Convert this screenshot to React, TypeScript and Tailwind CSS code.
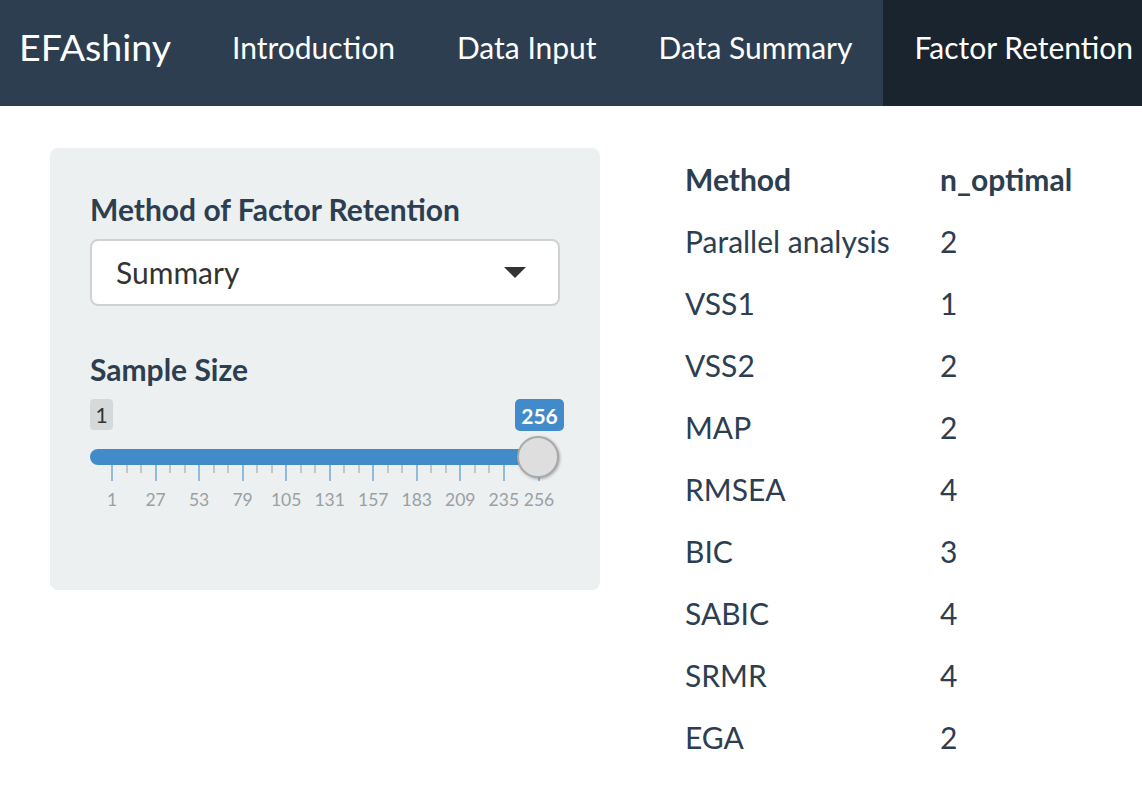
import React from 'react'

const navItems = ['Introduction', 'Data Input', 'Data Summary', 'Factor Retention']

const rows: [string, number][] = [
    ['Parallel analysis', 2],
    ['VSS1', 1],
    ['VSS2', 2],
    ['MAP', 2],
    ['RMSEA', 4],
    ['BIC', 3],
    ['SABIC', 4],
    ['SRMR', 4],
    ['EGA', 2],
]

// slider grid geometry (px, relative to the slider box)
const gridStart = 22
const gridEnd = 449
const min = 1
const max = 256
const step = 26

const xOf = (v: number) => gridStart + ((v - min) / (max - min)) * (gridEnd - gridStart)

const majors: number[] = []
for (let v = min; v < max; v += step) majors.push(v)
majors.push(max)

const minors: number[] = []
for (let i = 0; i < majors.length - 2; i++) {
    const a = majors[i]
    minors.push(a + step / 3, a + (2 * step) / 3)
}

const Slider = () => {
    return (
        <div className="w-[474px]">
            <div className="flex items-start justify-between">
                <span className="flex h-[31px] w-[23px] items-center justify-center rounded-[4px] bg-[#d5d9da] text-[21px] leading-none text-[#333]">
                    1
                </span>
                <span className="flex h-[32px] w-[49px] items-center justify-center rounded-[5px] bg-[#428bca] text-[21px] font-bold leading-none text-white">
                    256
                </span>
            </div>
            <div className="mt-[5px] flex h-[42px] items-center">
                <div className="h-[16px] w-[450px] rounded-l-full bg-[#428bca]" />
                <div className="relative z-10 -ml-[23px] h-[42px] w-[42px] shrink-0 rounded-full border-2 border-[#a9a9a9] bg-[#dedede] shadow-[1px_1px_3px_rgba(0,0,0,0.3)]" />
            </div>
            {/* grid: ticks and labels sit at their value on the scale */}
            <div className="relative -mt-[13px] h-[50px]">
                {minors.map((v) => (
                    <div
                        key={'m' + v}
                        className="absolute top-0 h-[8px] w-[2px] bg-[#c4c6c8]"
                        style={{ left: xOf(v) - 1 }}
                    />
                ))}
                {majors.map((v) => (
                    <div
                        key={'M' + v}
                        className="absolute top-0 h-[16px] w-[2px] bg-[#93b9df]"
                        style={{ left: xOf(v) - 1 }}
                    />
                ))}
                {majors.map((v) => (
                    <span
                        key={'t' + v}
                        className="absolute top-[25px] w-[40px] text-center text-[17.5px] leading-[20px] text-[#9a9fa3]"
                        style={{ left: xOf(v) - 20 }}
                    >
                        {v}
                    </span>
                ))}
            </div>
        </div>
    )
}

export default function App() {
    return (
        <div className="min-h-[796px] bg-white font-['Lato','Open_Sans',sans-serif] text-[#2c3e50]">
            <nav className="flex h-[106px] items-stretch overflow-hidden whitespace-nowrap bg-[#2c3e50] text-white">
                <div className="flex items-center pb-[12px] pl-[19px] pr-[30px] text-[37.5px]">EFAshiny</div>
                {navItems.map((item, i) => (
                    <div
                        key={item}
                        className={
                            'flex shrink-0 items-center px-[31px] pb-[12px] text-[30px] ' +
                            (i === navItems.length - 1 ? 'bg-[#1a242f]' : '')
                        }
                    >
                        {item}
                    </div>
                ))}
            </nav>

            <div className="flex items-start pl-[50px] pt-[42px]">
                <div className="h-[442px] w-[550px] shrink-0 rounded-[8px] bg-[#ecf0f1] px-[40px] pt-[40px]">
                    <div className="mb-[9px] text-[30px] font-bold leading-[42px]">Method of Factor Retention</div>
                    <div className="flex h-[67px] w-[470px] items-center justify-between rounded-[8px] border-2 border-[#cfd2d3] bg-white pl-[24px] pr-[32px] text-[30px] text-[#333]">
                        <span>Summary</span>
                        <svg width="22" height="11" viewBox="0 0 22 11">
                            <path d="M0 0 L22 0 L11 11 Z" fill="#333" />
                        </svg>
                    </div>
                    <div className="mb-[9px] mt-[42px] text-[30px] font-bold leading-[42px]">Sample Size</div>
                    <Slider />
                </div>

                <table className="ml-[75px] border-collapse text-[30px]">
                    <thead>
                        <tr className="h-[62px]">
                            <th className="w-[255px] px-[10px] text-left font-bold">Method</th>
                            <th className="px-[10px] text-left font-bold">n_optimal</th>
                        </tr>
                    </thead>
                    <tbody>
                        {rows.map(([name, n]) => (
                            <tr key={name} className="h-[62px]">
                                <td className="px-[10px]">{name}</td>
                                <td className="px-[10px]">{n}</td>
                            </tr>
                        ))}
                    </tbody>
                </table>
            </div>
        </div>
    )
}
